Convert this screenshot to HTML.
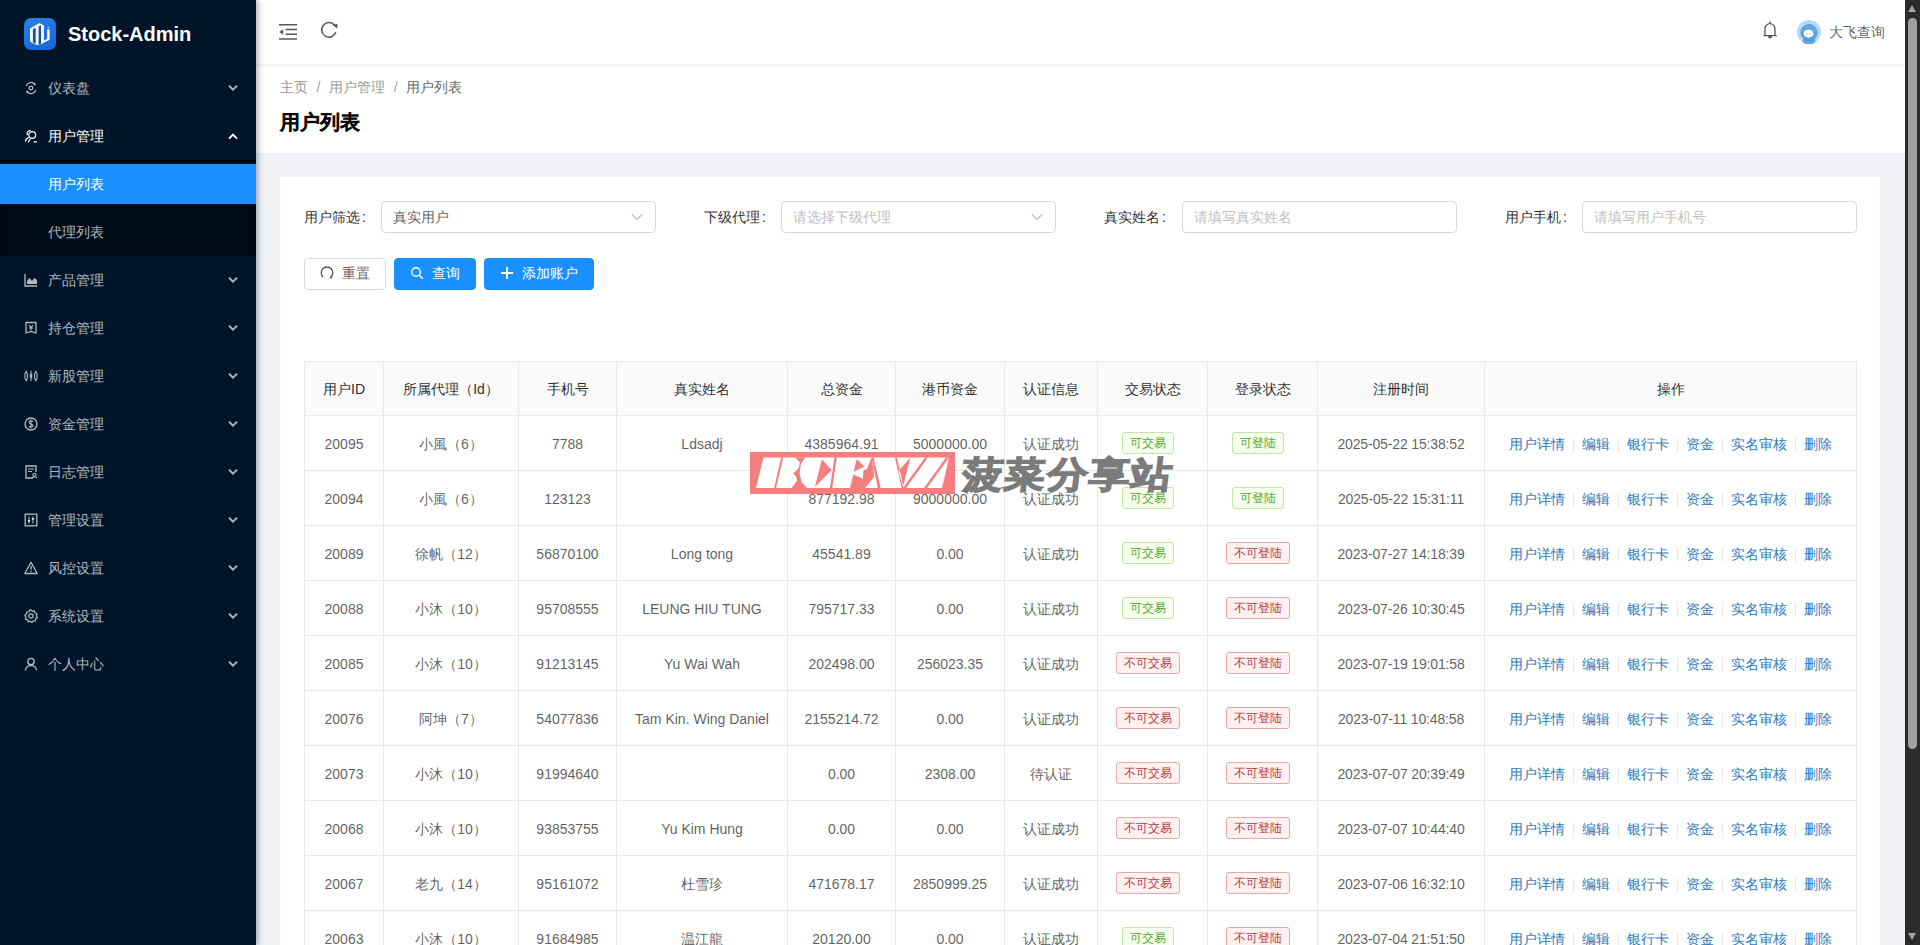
<!DOCTYPE html>
<html><head><meta charset="utf-8"><title>Stock-Admin</title>
<style>*{box-sizing:border-box;margin:0;padding:0}
html,body{width:1920px;height:945px;overflow:hidden}
body{font-family:"Liberation Sans",sans-serif;font-size:14px;line-height:1.5;background:#f0f2f5;position:relative;color:rgba(0,0,0,.65)}
#side{position:absolute;left:0;top:0;width:256px;height:945px;background:#001529;box-shadow:2px 0 6px rgba(0,21,41,.35);z-index:10}
#logo{position:absolute;left:24px;top:18px;width:32px;height:32px;border-radius:7px;background:linear-gradient(160deg,#2a7fe8,#1565d8)}
#brand{position:absolute;left:68px;top:18px;height:32px;line-height:32px;font-size:20px;font-weight:bold;color:#fff;white-space:nowrap}
.mi{position:absolute;left:0;width:256px;height:40px;line-height:40px;color:rgba(255,255,255,.7);white-space:nowrap}
.mi .t{position:absolute;left:48px;top:0}
.mi svg.ic{position:absolute;left:24px;top:13px;width:14px;height:14px}
.mi svg.ar{position:absolute;left:228px;top:16.5px;width:10px;height:7px;overflow:visible}
.mi.open{color:#fff}
#subbg{position:absolute;left:0;top:160px;width:256px;height:96px;background:#000c17;box-shadow:inset 0 2px 8px rgba(0,0,0,.45)}
.mi.sel{background:#1890ff;color:#fff}
#hdr{position:absolute;left:256px;top:0;width:1649px;height:64px;background:#fff;box-shadow:0 1px 4px rgba(0,21,41,.08);z-index:5}
#ph{position:absolute;left:256px;top:64px;width:1649px;height:89px;background:#fff}
#bc{position:absolute;left:280px;top:76px;height:22px;line-height:22px;color:rgba(0,0,0,.45);white-space:nowrap}
#bc .sp{margin:0 8.6px;color:rgba(0,0,0,.45)}
#bc .last{color:rgba(0,0,0,.65)}
#ttl{position:absolute;left:280px;top:108px;height:28px;line-height:28px;font-size:20px;font-weight:bold;color:rgba(0,0,0,.85);-webkit-text-stroke:.4px rgba(0,0,0,.85)}
#card{position:absolute;left:280px;top:177px;width:1600px;height:800px;background:#fff}
.fl{position:absolute;top:201px;height:32px;line-height:32px;color:rgba(0,0,0,.85);white-space:nowrap}
.inp{position:absolute;top:201px;width:275px;height:32px;line-height:30px;border:1px solid #d9d9d9;border-radius:4px;background:#fff;padding-left:11px;white-space:nowrap}
.inp.ph{color:#bfbfbf}
.inp svg{position:absolute;right:12px;top:11px;width:12px;height:8px}
.btn{position:absolute;top:258px;height:32px;line-height:30px;border-radius:4px;border:1px solid #d9d9d9;background:#fff;color:rgba(0,0,0,.65);white-space:nowrap}
.btn.p{background:#1890ff;border-color:#1890ff;color:#fff}
.btn svg{position:absolute;top:7px;width:14px;height:14px}
.btn .t{position:absolute;top:-1px}
#tbl{position:absolute;left:24px;top:184px;border-collapse:separate;border-spacing:0;table-layout:fixed;width:1552px;border-top:1px solid #e8e8e8;border-left:1px solid #e8e8e8}
#tbl th,#tbl td{border-right:1px solid #e8e8e8;border-bottom:1px solid #e8e8e8;text-align:center;white-space:nowrap;overflow:hidden}
#tbl th{height:54px;background:#fafafa;color:rgba(0,0,0,.85);font-weight:normal}
#tbl td{height:55px;color:rgba(0,0,0,.65);padding-top:2px}
#tbl th{padding-top:1px}
.dt{letter-spacing:-.15px}
.tag{display:inline-block;height:22px;line-height:20px;padding:0 7px;border:1px solid;border-radius:3px;font-size:12px;margin-right:10px;vertical-align:middle;position:relative;top:-1px}
.tag.g{color:#55a630;background:#f6ffed;border-color:#c2e5a8}
.tag.r{color:#b93a42;background:#fff1f0;border-color:#e2aaaa}
.ops a{color:#3079bb}
.dv{display:inline-block;width:1px;height:14px;background:#e8e8e8;margin:0 8px;vertical-align:middle}
#wm{position:absolute;left:750px;top:452px;width:425px;height:42px;z-index:20}
.wml{position:absolute;left:0;top:0;width:205px;height:42px;background:#f47e7e}
.wmr{position:absolute;left:210px;top:1px;height:44px;line-height:44px;font-size:36px;font-weight:900;color:#7b7b7b;white-space:nowrap;letter-spacing:1.5px;-webkit-text-stroke:1.4px #7b7b7b;transform:scaleX(1.125) skewX(-6deg);transform-origin:0 100%}
#sb{position:absolute;left:1905px;top:0;width:15px;height:945px;background:#2b2b2b;z-index:30}
#sb .th{position:absolute;left:3px;top:18px;width:9px;height:731px;border-radius:5px;background:#a0a0a0}
#sb .up{position:absolute;left:3px;top:5px;width:0;height:0;border-left:4.5px solid transparent;border-right:4.5px solid transparent;border-bottom:7px solid #a0a0a0}
#sb .dn{position:absolute;left:3px;top:933px;width:0;height:0;border-left:4.5px solid transparent;border-right:4.5px solid transparent;border-top:7px solid #a0a0a0}

.cl{margin-left:2px}
</style></head>
<body>
<div id="side">
<div id="logo"><svg width="32" height="32" viewBox="0 0 32 32"><path fill="#f4fbff" d="M6 10.4L15.5 5L20 7.5V22.5L23.1 20.8V11.6H25.6V21.8L15 27.2L11.7 26.5L6 23.5Z"/><path fill="#1d4f96" d="M8.9 11.3L11.7 9.8V25.8L8.9 24.3Z M14.6 8.4L17 7.2V26.2L14.6 26.9Z"/><circle cx="24.3" cy="9.6" r=".8" fill="#cfe8ff"/></svg></div>
<div id="brand">Stock-Admin</div>
<div id="subbg"></div>
<div class="mi" style="top:68px"><svg class="ic" viewBox="0 0 14 14"><circle cx="7" cy="7" r="1.8" fill="none" stroke="currentColor" stroke-width="1.3"/><path d="M2.2 5.2A5 5 0 0 1 10.8 3.2M11.8 8.8A5 5 0 0 1 3.2 10.8" fill="none" stroke="currentColor" stroke-width="1.3"/><circle cx="10.8" cy="3.2" r="1" fill="currentColor"/><circle cx="3.2" cy="10.8" r="1" fill="currentColor"/></svg><span class="t">仪表盘</span><svg class="ar" viewBox="0 0 10 7"><path d="M1 0.6L5 4.6L9 0.6" fill="none" stroke="currentColor" stroke-width="1.9"/></svg></div>
<div class="mi open" style="top:116px"><svg class="ic" viewBox="0 0 14 14"><circle cx="8.2" cy="6" r="3.4" fill="none" stroke="currentColor" stroke-width="1.2"/><path d="M3.3 6.2A3.6 3.6 0 0 1 6.6 1.4M1.2 12.6C1.6 10.6 2.8 9.2 4.6 8.4M4.3 13.4C4.8 11.8 5.6 10.6 6.6 9.8M9.6 12.8H12.9" fill="none" stroke="currentColor" stroke-width="1.2"/></svg><span class="t">用户管理</span><svg class="ar" viewBox="0 0 10 7"><path d="M1 5.6L5 1.6L9 5.6" fill="none" stroke="currentColor" stroke-width="1.9"/></svg></div>
<div class="mi" style="top:260px"><svg class="ic" viewBox="0 0 14 14"><path d="M1 1V13H13" fill="none" stroke="currentColor" stroke-width="1.3"/><path d="M3 11V8L5.5 5L8 8L10.5 5L13 7V11Z" fill="currentColor"/></svg><span class="t">产品管理</span><svg class="ar" viewBox="0 0 10 7"><path d="M1 0.6L5 4.6L9 0.6" fill="none" stroke="currentColor" stroke-width="1.9"/></svg></div>
<div class="mi" style="top:308px"><svg class="ic" viewBox="0 0 14 14"><path d="M2 1.5H12V12L7 10.5L2 12Z" fill="none" stroke="currentColor" stroke-width="1.3"/><path d="M5 4L7 6.5L9 4M7 6.5V9.5M5 7H9" fill="none" stroke="currentColor" stroke-width="1.1"/></svg><span class="t">持仓管理</span><svg class="ar" viewBox="0 0 10 7"><path d="M1 0.6L5 4.6L9 0.6" fill="none" stroke="currentColor" stroke-width="1.9"/></svg></div>
<div class="mi" style="top:356px"><svg class="ic" viewBox="0 0 14 14"><rect x="1" y="3.5" width="2.4" height="7" rx="1" fill="none" stroke="currentColor" stroke-width="1.1"/><rect x="5.8" y="4.5" width="2.4" height="5" rx="1" fill="currentColor"/><rect x="10.6" y="3.5" width="2.4" height="7" rx="1" fill="none" stroke="currentColor" stroke-width="1.1"/><path d="M2.2 1.5V3.5M2.2 10.5V12.5M7 2V4.5M7 9.5V12M11.8 1.5V3.5M11.8 10.5V12.5" stroke="currentColor" stroke-width="1.1"/></svg><span class="t">新股管理</span><svg class="ar" viewBox="0 0 10 7"><path d="M1 0.6L5 4.6L9 0.6" fill="none" stroke="currentColor" stroke-width="1.9"/></svg></div>
<div class="mi" style="top:404px"><svg class="ic" viewBox="0 0 14 14"><circle cx="7" cy="7" r="6" fill="none" stroke="currentColor" stroke-width="1.3"/><path d="M9 4.8C8.5 4 7.8 3.8 7 3.8C5.8 3.8 5 4.4 5 5.3C5 7.3 9 6.5 9 8.6C9 9.6 8.1 10.2 7 10.2C6 10.2 5.3 9.8 4.9 9M7 2.5V11.5" fill="none" stroke="currentColor" stroke-width="1.1"/></svg><span class="t">资金管理</span><svg class="ar" viewBox="0 0 10 7"><path d="M1 0.6L5 4.6L9 0.6" fill="none" stroke="currentColor" stroke-width="1.9"/></svg></div>
<div class="mi" style="top:452px"><svg class="ic" viewBox="0 0 14 14"><path d="M9 13H2V1H12V7" fill="none" stroke="currentColor" stroke-width="1.3"/><path d="M4 4H10M4 6.5H8" stroke="currentColor" stroke-width="1.1"/><circle cx="10.5" cy="9.8" r="1.6" fill="none" stroke="currentColor" stroke-width="1.1"/><path d="M8.2 13.2A2.5 2.5 0 0 1 12.8 13.2" fill="none" stroke="currentColor" stroke-width="1.1"/></svg><span class="t">日志管理</span><svg class="ar" viewBox="0 0 10 7"><path d="M1 0.6L5 4.6L9 0.6" fill="none" stroke="currentColor" stroke-width="1.9"/></svg></div>
<div class="mi" style="top:500px"><svg class="ic" viewBox="0 0 14 14"><rect x="1.2" y="1.2" width="11.6" height="11.6" fill="none" stroke="currentColor" stroke-width="1.3"/><path d="M5 3.5V10.5M9 3.5V10.5" stroke="currentColor" stroke-width="1.1"/><rect x="3.8" y="7" width="2.4" height="1.8" fill="currentColor"/><rect x="7.8" y="5" width="2.4" height="1.8" fill="currentColor"/></svg><span class="t">管理设置</span><svg class="ar" viewBox="0 0 10 7"><path d="M1 0.6L5 4.6L9 0.6" fill="none" stroke="currentColor" stroke-width="1.9"/></svg></div>
<div class="mi" style="top:548px"><svg class="ic" viewBox="0 0 14 14"><path d="M7 1.2L13.2 12.5H0.8Z" fill="none" stroke="currentColor" stroke-width="1.3" stroke-linejoin="round"/><path d="M7 5V8.8" stroke="currentColor" stroke-width="1.3"/><circle cx="7" cy="10.5" r=".8" fill="currentColor"/></svg><span class="t">风控设置</span><svg class="ar" viewBox="0 0 10 7"><path d="M1 0.6L5 4.6L9 0.6" fill="none" stroke="currentColor" stroke-width="1.9"/></svg></div>
<div class="mi" style="top:596px"><svg class="ic" viewBox="0 0 14 14"><path d="M7 0.8L8.4 2.4L10.5 1.9L11 4L13 4.8L12.3 6.9L13.4 8.6L11.6 9.8L11.5 12L9.3 11.9L7.9 13.5L6.3 12.2L4.2 12.8L3.5 10.8L1.4 10.2L2 8.1L0.7 6.4L2.5 5.1L2.6 3L4.7 3L5.7 1.1Z" fill="none" stroke="currentColor" stroke-width="1.2" stroke-linejoin="round"/><circle cx="7" cy="7" r="2.2" fill="none" stroke="currentColor" stroke-width="1.2"/></svg><span class="t">系统设置</span><svg class="ar" viewBox="0 0 10 7"><path d="M1 0.6L5 4.6L9 0.6" fill="none" stroke="currentColor" stroke-width="1.9"/></svg></div>
<div class="mi" style="top:644px"><svg class="ic" viewBox="0 0 14 14"><circle cx="7" cy="4.5" r="3.2" fill="none" stroke="currentColor" stroke-width="1.3"/><path d="M1.3 13.3A5.8 5.8 0 0 1 12.7 13.3" fill="none" stroke="currentColor" stroke-width="1.3"/></svg><span class="t">个人中心</span><svg class="ar" viewBox="0 0 10 7"><path d="M1 0.6L5 4.6L9 0.6" fill="none" stroke="currentColor" stroke-width="1.9"/></svg></div>
<div class="mi sel" style="top:164px"><span class="t">用户列表</span></div>
<div class="mi" style="top:212px"><span class="t">代理列表</span></div>
</div>

<div id="hdr">
<svg style="position:absolute;left:23px;top:23px" width="18" height="18" viewBox="0 0 18 18"><path d="M0 1.8H18M6.6 6.6H18M6.6 11.3H18M0 16H18" stroke="#555" stroke-width="1.5"/><path d="M0.3 9L4.1 6.2V11.8Z" fill="#555"/></svg>
<svg style="position:absolute;left:63px;top:21px" width="19" height="18" viewBox="0 0 19 18"><path d="M16.86 11.35A7.3 7.3 0 1 1 15.59 4.16" fill="none" stroke="#555" stroke-width="1.5"/><path d="M13.9 4.3L18.3 2.8V7.4Z" fill="#555"/></svg>
<svg style="position:absolute;left:1506px;top:21px" width="16" height="18" viewBox="0 0 16 18"><path d="M2.95 14.6V7.65A5 5 0 0 1 12.95 7.65V14.6M1.6 14.6H14.7" fill="none" stroke="#555" stroke-width="1.3"/><path d="M6 14.8A2 2.7 0 0 0 10 14.8Z" fill="#555"/><rect x="7.3" y="0.4" width="1.3" height="2" fill="#555"/></svg>
<svg style="position:absolute;left:1541px;top:20px" width="24" height="24" viewBox="0 0 24 24"><circle cx="12" cy="12" r="12" fill="#b3daf6"/><ellipse cx="12" cy="21" rx="6.5" ry="3.5" fill="#5ca9e6"/><circle cx="12" cy="12.5" r="8" fill="#5aaef0" stroke="#3d80c4" stroke-width=".7"/><ellipse cx="11.5" cy="13.6" rx="5.6" ry="4.6" fill="#fff" stroke="#2d5f9c" stroke-width=".7"/><circle cx="9.6" cy="13.4" r=".5" fill="#666"/><circle cx="13.2" cy="13.4" r=".5" fill="#666"/></svg>
<div style="position:absolute;left:1573px;top:21px;height:22px;line-height:22px;color:rgba(0,0,0,.65);white-space:nowrap">大飞查询</div>
</div>
<div id="ph"></div>
<div id="bc">主页<span class="sp">/</span>用户管理<span class="sp">/</span><span class="last">用户列表</span></div>
<div id="ttl">用户列表</div>

<div id="card">
<table id="tbl"><colgroup><col style="width:79px"><col style="width:135px"><col style="width:98px"><col style="width:171px"><col style="width:108px"><col style="width:109px"><col style="width:93px"><col style="width:110px"><col style="width:110px"><col style="width:167px"><col style="width:372px"></colgroup><thead><tr><th>用户ID</th><th>所属代理（Id）</th><th>手机号</th><th>真实姓名</th><th>总资金</th><th>港币资金</th><th>认证信息</th><th>交易状态</th><th>登录状态</th><th>注册时间</th><th>操作</th></tr></thead><tbody><tr><td>20095</td><td>小風（6）</td><td>7788</td><td>Ldsadj</td><td>4385964.91</td><td>5000000.00</td><td>认证成功</td><td><span class="tag g">可交易</span></td><td><span class="tag g">可登陆</span></td><td class='dt'>2025-05-22 15:38:52</td><td class='ops'><a>用户详情</a><i class="dv"></i><a>编辑</a><i class="dv"></i><a>银行卡</a><i class="dv"></i><a>资金</a><i class="dv"></i><a>实名审核</a><i class="dv"></i><a>删除</a></td></tr><tr><td>20094</td><td>小風（6）</td><td>123123</td><td></td><td>877192.98</td><td>9000000.00</td><td>认证成功</td><td><span class="tag g">可交易</span></td><td><span class="tag g">可登陆</span></td><td class='dt'>2025-05-22 15:31:11</td><td class='ops'><a>用户详情</a><i class="dv"></i><a>编辑</a><i class="dv"></i><a>银行卡</a><i class="dv"></i><a>资金</a><i class="dv"></i><a>实名审核</a><i class="dv"></i><a>删除</a></td></tr><tr><td>20089</td><td>徐帆（12）</td><td>56870100</td><td>Long tong</td><td>45541.89</td><td>0.00</td><td>认证成功</td><td><span class="tag g">可交易</span></td><td><span class="tag r">不可登陆</span></td><td class='dt'>2023-07-27 14:18:39</td><td class='ops'><a>用户详情</a><i class="dv"></i><a>编辑</a><i class="dv"></i><a>银行卡</a><i class="dv"></i><a>资金</a><i class="dv"></i><a>实名审核</a><i class="dv"></i><a>删除</a></td></tr><tr><td>20088</td><td>小沐（10）</td><td>95708555</td><td>LEUNG HIU TUNG</td><td>795717.33</td><td>0.00</td><td>认证成功</td><td><span class="tag g">可交易</span></td><td><span class="tag r">不可登陆</span></td><td class='dt'>2023-07-26 10:30:45</td><td class='ops'><a>用户详情</a><i class="dv"></i><a>编辑</a><i class="dv"></i><a>银行卡</a><i class="dv"></i><a>资金</a><i class="dv"></i><a>实名审核</a><i class="dv"></i><a>删除</a></td></tr><tr><td>20085</td><td>小沐（10）</td><td>91213145</td><td>Yu Wai Wah</td><td>202498.00</td><td>256023.35</td><td>认证成功</td><td><span class="tag r">不可交易</span></td><td><span class="tag r">不可登陆</span></td><td class='dt'>2023-07-19 19:01:58</td><td class='ops'><a>用户详情</a><i class="dv"></i><a>编辑</a><i class="dv"></i><a>银行卡</a><i class="dv"></i><a>资金</a><i class="dv"></i><a>实名审核</a><i class="dv"></i><a>删除</a></td></tr><tr><td>20076</td><td>阿坤（7）</td><td>54077836</td><td>Tam Kin. Wing Daniel</td><td>2155214.72</td><td>0.00</td><td>认证成功</td><td><span class="tag r">不可交易</span></td><td><span class="tag r">不可登陆</span></td><td class='dt'>2023-07-11 10:48:58</td><td class='ops'><a>用户详情</a><i class="dv"></i><a>编辑</a><i class="dv"></i><a>银行卡</a><i class="dv"></i><a>资金</a><i class="dv"></i><a>实名审核</a><i class="dv"></i><a>删除</a></td></tr><tr><td>20073</td><td>小沐（10）</td><td>91994640</td><td></td><td>0.00</td><td>2308.00</td><td>待认证</td><td><span class="tag r">不可交易</span></td><td><span class="tag r">不可登陆</span></td><td class='dt'>2023-07-07 20:39:49</td><td class='ops'><a>用户详情</a><i class="dv"></i><a>编辑</a><i class="dv"></i><a>银行卡</a><i class="dv"></i><a>资金</a><i class="dv"></i><a>实名审核</a><i class="dv"></i><a>删除</a></td></tr><tr><td>20068</td><td>小沐（10）</td><td>93853755</td><td>Yu Kim Hung</td><td>0.00</td><td>0.00</td><td>认证成功</td><td><span class="tag r">不可交易</span></td><td><span class="tag r">不可登陆</span></td><td class='dt'>2023-07-07 10:44:40</td><td class='ops'><a>用户详情</a><i class="dv"></i><a>编辑</a><i class="dv"></i><a>银行卡</a><i class="dv"></i><a>资金</a><i class="dv"></i><a>实名审核</a><i class="dv"></i><a>删除</a></td></tr><tr><td>20067</td><td>老九（14）</td><td>95161072</td><td>杜雪珍</td><td>471678.17</td><td>2850999.25</td><td>认证成功</td><td><span class="tag r">不可交易</span></td><td><span class="tag r">不可登陆</span></td><td class='dt'>2023-07-06 16:32:10</td><td class='ops'><a>用户详情</a><i class="dv"></i><a>编辑</a><i class="dv"></i><a>银行卡</a><i class="dv"></i><a>资金</a><i class="dv"></i><a>实名审核</a><i class="dv"></i><a>删除</a></td></tr><tr><td>20063</td><td>小沐（10）</td><td>91684985</td><td>温江龍</td><td>20120.00</td><td>0.00</td><td>认证成功</td><td><span class="tag g">可交易</span></td><td><span class="tag r">不可登陆</span></td><td class='dt'>2023-07-04 21:51:50</td><td class='ops'><a>用户详情</a><i class="dv"></i><a>编辑</a><i class="dv"></i><a>银行卡</a><i class="dv"></i><a>资金</a><i class="dv"></i><a>实名审核</a><i class="dv"></i><a>删除</a></td></tr></tbody></table>
</div>
<div class="fl" style="left:304px">用户筛选<span class="cl">:</span></div>
<div class="inp" style="left:381px">真实用户<svg viewBox="0 0 12 8"><path d="M1 1.5L6 6.5L11 1.5" fill="none" stroke="#bfbfbf" stroke-width="1.2"/></svg></div>
<div class="fl" style="left:704px">下级代理<span class="cl">:</span></div>
<div class="inp ph" style="left:781px">请选择下级代理<svg viewBox="0 0 12 8"><path d="M1 1.5L6 6.5L11 1.5" fill="none" stroke="#bfbfbf" stroke-width="1.2"/></svg></div>
<div class="fl" style="left:1104px">真实姓名<span class="cl">:</span></div>
<div class="inp ph" style="left:1182px">请填写真实姓名</div>
<div class="fl" style="left:1505px">用户手机<span class="cl">:</span></div>
<div class="inp ph" style="left:1582px">请填写用户手机号</div>
<div class="btn" style="left:304px;width:82px"><svg style="left:15px" viewBox="0 0 14 14"><path d="M3.2 11.2A5.8 5.8 0 1 1 10.8 11.2" fill="none" stroke="#555" stroke-width="1.3"/><path d="M9.2 12.6L12 12.3L11.6 9.6Z" fill="#555"/></svg><span class="t" style="left:37px">重置</span></div>
<div class="btn p" style="left:394px;width:82px"><svg style="left:15px" viewBox="0 0 14 14"><circle cx="6" cy="6" r="4.3" fill="none" stroke="#fff" stroke-width="1.5"/><path d="M9.2 9.2L12.8 12.8" stroke="#fff" stroke-width="1.6"/></svg><span class="t" style="left:37px">查询</span></div>
<div class="btn p" style="left:484px;width:110px"><svg style="left:15px" viewBox="0 0 14 14"><path d="M7 1V13M1 7H13" stroke="#fff" stroke-width="1.9"/></svg><span class="t" style="left:37px">添加账户</span></div>

<div id="wm"><div class="wml"><svg width="205" height="42" viewBox="0 0 205 42"><path fill="#fff" d="M13.5 5.5 L198.9 5.5 L197.7 11.8 L192.0 36.1 L6.0 36.1Z"/><path fill="#f47e7e" d="M31.2 5.5 L33.2 5.5 L26.1 36.1 L24.1 36.1Z M45.0 5.5 L55.3 5.5 L50.8 12.0 L49.6 21.0 L51.5 30.0 L57.0 36.1 L41.6 36.1 L46.8 29.0 L46.5 25.0 L43.3 21.5 L48.8 16.0 L49.8 10.0Z M71.9 7.2 L81.7 18.0 L65.0 34.7Z M84.5 5.5 L86.8 5.5 L82.2 36.1 L79.9 36.1Z M106.6 7.2 L114.6 14.6 L103.7 19.8Z M103.5 22.0 L116.9 17.0 L121.5 5.5 L124.4 24.4 L115.2 36.1 L100.0 36.1Z M121.5 5.5 L123.5 5.5 L130.7 36.1 L127.8 36.1Z M145.0 5.5 L147.0 5.5 L153.5 36.1 L151.5 36.1Z M160.5 5.5 L148.4 19.2 L153.0 34.7Z M175.0 5.5 L178.0 5.5 L156.0 36.1 L153.0 36.1Z M196.0 5.5 L199.0 5.5 L177.0 36.1 L174.0 36.1Z"/><path fill="#fff" d="M103.2 22.5 L113.5 17.5 L112.9 26.7Z"/></svg></div><div class="wmr">菠菜分享站</div></div>
<div id="sb"><div class="up"></div><div class="th"></div><div class="dn"></div></div>
</body></html>
